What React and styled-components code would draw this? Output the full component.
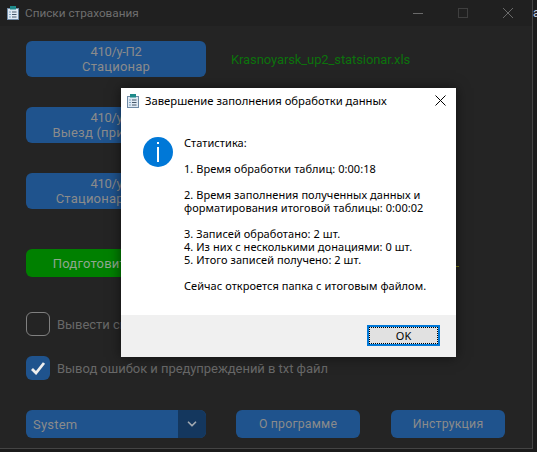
import React from "react"
import styled, { createGlobalStyle } from "styled-components"
import { ChevronDown } from "lucide-react"

const GlobalStyle = createGlobalStyle`
  html, body {
    margin: 0;
    padding: 0;
    background: #1a1a1a;
    overflow: hidden;
  }
`

const Screen = styled.div`
  position: relative;
  width: 537px;
  height: 452px;
  overflow: hidden;
  background: #1b1b1b;
  font-family: Roboto, "Liberation Sans", sans-serif;
`

const Window = styled.div`
  width: 533px;
  height: 449px;
  box-sizing: border-box;
  background: #242424;
  border-right: 1px solid #444;
  border-bottom: 1px solid #444;
  display: flex;
  flex-direction: column;
`

const BehindWindow = styled.span`
  position: absolute;
  left: 533px;
  top: 6px;
  color: #c4d0e4;
  font-size: 12px;
`

const TitleBar = styled.div`
  height: 26px;
  background: #202020;
  display: flex;
  align-items: center;
  padding: 0 7px;
  gap: 6px;
  color: #6f6f6f;
  font-size: 11.75px;
`

const TitleText = styled.span`
  flex: 1;
`

const WinButtons = styled.div`
  display: flex;
  align-items: center;
  gap: 35px;
  padding-right: 12px;
`

const Body = styled.div`
  padding: 15px 0 0 26px;
  display: flex;
  flex-direction: column;
`

const Row = styled.div`
  display: flex;
  align-items: center;
  gap: 25px;
  margin-bottom: ${(p) => p.$gap || 30}px;
`

const BlueButton = styled.div`
  flex: none;
  width: 180px;
  height: 36px;
  border-radius: 6px;
  background: #1f538d;
  color: #8b8b8b;
  font-size: 13px;
  line-height: 15px;
  letter-spacing: 0.2px;
  text-align: center;
  display: flex;
  flex-direction: column;
  justify-content: center;
`

const FormCode = styled.span`
  letter-spacing: -0.3px;
`

const GreenButton = styled(BlueButton)`
  height: 28px;
  background: #008000;
  color: #8fa78f;
`

const FileName = styled.span`
  color: #0c720c;
  font-size: 13px;
  letter-spacing: -0.1px;
`

const StatusMark = styled.span`
  width: 3px;
  height: 1px;
  margin: 6px 0 0 225px;
  background: #7a7a10;
`

const CheckRow = styled.div`
  display: flex;
  align-items: center;
  gap: 7px;
  color: #686868;
  font-size: 13px;
  letter-spacing: -0.05px;
  margin-bottom: ${(p) => p.$gap}px;
`

const CheckBox = styled.div`
  width: 24px;
  height: 24px;
  box-sizing: border-box;
  border-radius: 6px;
  border: ${(p) => (p.$checked ? "none" : "1px solid #808080")};
  background: ${(p) => (p.$checked ? "#1f538d" : "transparent")};
  display: flex;
  align-items: center;
  justify-content: center;
`

const BottomRow = styled.div`
  display: flex;
  align-items: center;
  gap: 30px;
`

const Select = styled.div`
  flex: none;
  width: 180px;
  height: 28px;
  border-radius: 6px;
  overflow: hidden;
  background: #1f538d;
  display: flex;
  color: #8b8b8b;
  font-size: 13px;
  letter-spacing: 0.2px;
`

const SelectValue = styled.div`
  flex: 1;
  padding-left: 7px;
  display: flex;
  align-items: center;
`

const SelectArrow = styled.div`
  width: 28px;
  background: #14375e;
  display: flex;
  align-items: center;
  justify-content: center;
  color: #a0a8b0;
`

const SmallButton = styled(BlueButton)`
  width: ${(p) => p.$width}px;
  height: 28px;
  font-size: 12.3px;
  & + & {
    margin-left: 1px;
  }
`

const Dialog = styled.div`
  position: absolute;
  left: 121px;
  top: 88px;
  width: 335px;
  height: 269px;
  background: #fff;
  box-shadow: 0 0 12px rgba(0, 0, 0, 0.55);
  display: flex;
  flex-direction: column;
  font-family: "Noto Sans", "Open Sans", sans-serif;
  font-size: 11px;
  color: #000;
`

const DialogTitle = styled.div`
  height: 25px;
  display: flex;
  align-items: center;
  padding: 0 10px 0 6px;
  gap: 6px;
  font-size: 11.25px;
`

const DialogBody = styled.div`
  flex: 1;
  display: flex;
  padding: 24px 0 0 22px;
  gap: 11px;
`

const InfoIcon = styled.svg`
  flex: none;
  width: 30px;
  height: 30px;
`

const Message = styled.div`
  margin-top: -1px;
  line-height: 13px;
  letter-spacing: 0.05px;
`

const Line = styled.div`
  min-height: 13px;
  white-space: nowrap;
`

const DialogFooter = styled.div`
  height: 42px;
  background: #f0f0f0;
  display: flex;
  align-items: flex-start;
  justify-content: flex-end;
  padding: 10px 16px 0 0;
  box-sizing: border-box;
`

const OkButton = styled.div`
  width: 73px;
  height: 21px;
  box-sizing: border-box;
  border: 2px solid #0078d7;
  background: #e1e1e1;
  outline: 1px dotted #000;
  outline-offset: -3px;
  display: flex;
  align-items: center;
  justify-content: center;
`

const ClipboardIcon = () => (
  <svg width="12" height="14" viewBox="0 0 12 14">
    <rect x="0.5" y="2.5" width="11" height="11" fill="#dfe9f3" stroke="#6f8aa5" />
    <rect x="3" y="0" width="6" height="3.5" fill="#1e8a8a" />
    <path d="M2.5 6h1M2.5 8.5h1M2.5 11h1" stroke="#1f5f8f" />
    <path d="M5 6h4.5M5 8.5h4.5M5 11h4.5" stroke="#46586b" />
  </svg>
)

const statLines = [
  "Статистика:",
  "",
  "1. Время обработки таблиц: 0:00:18",
  "",
  "2. Время заполнения полученных данных и",
  "форматирования итоговой таблицы: 0:00:02",
  "",
  "3. Записей обработано: 2 шт.",
  "4. Из них с несколькими донациями: 0 шт.",
  "5. Итого записей получено: 2 шт.",
  "",
  "Сейчас откроется папка с итоговым файлом.",
]

export default function App() {
  return (
    <Screen>
      <GlobalStyle />
      <BehindWindow>a</BehindWindow>
      <Window>
        <TitleBar>
          <ClipboardIcon />
          <TitleText>Списки страхования</TitleText>
          <WinButtons>
            <svg width="10" height="10" viewBox="0 0 10 10">
              <path d="M0 5.5h10" stroke="#6a6a6a" />
            </svg>
            <svg width="10" height="10" viewBox="0 0 10 10">
              <rect x="0.5" y="0.5" width="9" height="9" fill="none" stroke="#3f3f3f" />
            </svg>
            <svg width="10" height="10" viewBox="0 0 10 10">
              <path d="M0 0l10 10M10 0L0 10" stroke="#6a6a6a" />
            </svg>
          </WinButtons>
        </TitleBar>
        <Body>
          <Row>
            <BlueButton>
              <FormCode>410/у-П2</FormCode>
              <span>Стационар</span>
            </BlueButton>
            <FileName>Krasnoyarsk_up2_statsionar.xls</FileName>
          </Row>
          <Row>
            <BlueButton>
              <FormCode>410/у-П2</FormCode>
              <span>Выезд (приписного)</span>
            </BlueButton>
          </Row>
          <Row $gap={40}>
            <BlueButton>
              <FormCode>410/у-П3</FormCode>
              <span>Стационар (прием)</span>
            </BlueButton>
          </Row>
          <Row $gap={35}>
            <GreenButton>Подготовить файлы</GreenButton>
            <StatusMark />
          </Row>
          <CheckRow $gap={20}>
            <CheckBox />
            <span>Вывести список</span>
          </CheckRow>
          <CheckRow $gap={30}>
            <CheckBox $checked>
              <svg width="16" height="14" viewBox="0 0 16 14">
                <path d="M2 8l4 4 8-10" fill="none" stroke="#eeeeee" strokeWidth="2.8" />
              </svg>
            </CheckBox>
            <span>Вывод ошибок и предупреждений в txt файл</span>
          </CheckRow>
          <BottomRow>
            <Select>
              <SelectValue>System</SelectValue>
              <SelectArrow>
                <ChevronDown size={14} strokeWidth={3} />
              </SelectArrow>
            </Select>
            <SmallButton $width={124}>О программе</SmallButton>
            <SmallButton $width={114}>Инструкция</SmallButton>
          </BottomRow>
        </Body>
      </Window>
      <Dialog>
        <DialogTitle>
          <ClipboardIcon />
          <TitleText>Завершение заполнения обработки данных</TitleText>
          <svg width="11" height="11" viewBox="0 0 11 11">
            <path d="M0.5 0.5l10 10M10.5 0.5l-10 10" stroke="#000" />
          </svg>
        </DialogTitle>
        <DialogBody>
          <InfoIcon viewBox="0 0 30 30">
            <circle cx="15" cy="15" r="15" fill="#0078d7" />
            <rect x="14" y="5" width="2" height="2" fill="#fff" />
            <rect x="14" y="10" width="2" height="15" fill="#fff" />
          </InfoIcon>
          <Message>
            {statLines.map((line, i) => (
              <Line key={i}>{line}</Line>
            ))}
          </Message>
        </DialogBody>
        <DialogFooter>
          <OkButton>OK</OkButton>
        </DialogFooter>
      </Dialog>
    </Screen>
  )
}
